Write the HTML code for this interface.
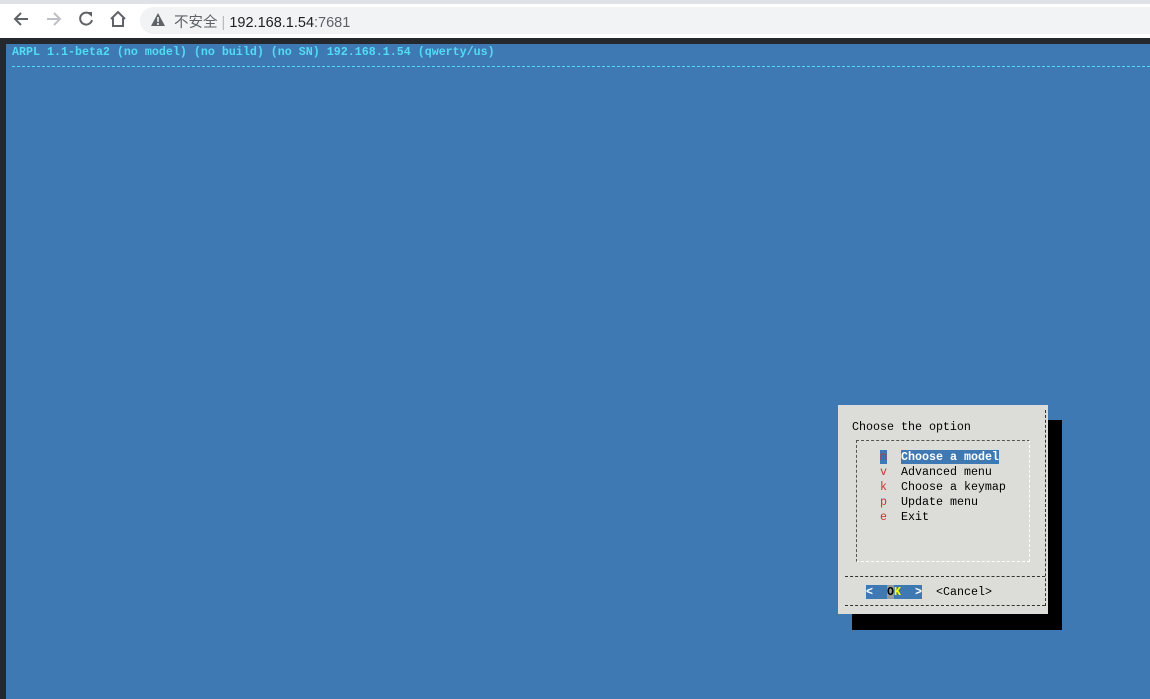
<!DOCTYPE html>
<html><head><meta charset="utf-8"><style>
*{margin:0;padding:0;box-sizing:border-box}
body{width:1150px;height:699px;overflow:hidden;background:#3f79b3;position:relative;font-family:"Liberation Mono",monospace}
#top{position:absolute;left:0;top:0;width:1150px;height:38px;background:#fff}
#tabs{position:absolute;left:0;top:0;width:1150px;height:4px;background:#dee1e6}
#pill{position:absolute;left:140px;top:7px;width:1010px;height:27px;background:#f1f3f4;border-radius:14px 0 0 14px}
#dark{position:absolute;left:0;top:38px;width:1150px;height:6px;background:#25282c}
#lb{position:absolute;left:0;top:38px;width:6px;height:661px;background:#25282c}
.ic{position:absolute;top:10px}
#url{position:absolute;left:174px;top:11px;font:14.5px "Liberation Sans","Noto Sans CJK SC",sans-serif;color:#5f6368}
#url b{font-weight:normal;color:#202124}
.t{position:absolute;font-size:11.67px;line-height:15px;white-space:pre}
#hdr{left:12px;top:45px;color:#52dcf3;font-weight:bold}
#dash{position:absolute;left:12px;top:66px;width:1138px;border-top:1px dashed #52dcf3}
#sh{position:absolute;left:852px;top:420px;width:210px;height:210px;background:#000}
#dlg{position:absolute;left:838px;top:405px;width:210px;height:209px;background:#dcdcd8}
#in{position:absolute;left:856px;top:440px;width:174px;height:122px;border:1px dashed #555;border-right-color:#fff;border-bottom-color:#fff}
#sep{position:absolute;left:845px;top:576px;width:200px;border-top:1px dashed #333}
#bot{position:absolute;left:845px;top:605px;width:200px;border-top:1px dashed #333}
#dr{position:absolute;left:1045px;top:410px;height:196px;border-left:1px dashed #333}
.k{color:#c33}
.sel{background:#3f79b3;color:#fff;font-weight:bold}
</style></head><body>
<div id="top"><div id="tabs"></div><div id="pill"></div>
<svg class="ic" style="left:12px" width="18" height="18" viewBox="0 0 18 18"><path d="M16 9H3M9 3L3 9l6 6" stroke="#5f6368" stroke-width="2" fill="none"/></svg>
<svg class="ic" style="left:45px" width="18" height="18" viewBox="0 0 18 18"><path d="M2 9h13M9 3l6 6-6 6" stroke="#bdc1c6" stroke-width="2" fill="none"/></svg>
<svg class="ic" style="left:77px" width="18" height="18" viewBox="0 0 18 18"><path d="M14 5A6 6 0 1 0 15 10" stroke="#5f6368" stroke-width="2" fill="none"/><path d="M10 2h5v5z" fill="#5f6368"/></svg>
<svg class="ic" style="left:109px" width="18" height="18" viewBox="0 0 18 18"><path d="M2 9L9 2l7 7M4 8v8h10V8" stroke="#5f6368" stroke-width="2" fill="none"/></svg>
<svg class="ic" style="left:151px;top:13px" width="14" height="13" viewBox="0 0 14 13"><path d="M7 0L14 13H0z" fill="#5f6368"/><path d="M7 4v5M7 10v2" stroke="#fff" stroke-width="1.5"/></svg>
<div id="url">不安全 <span style="color:#bbb">|</span> <b>192.168.1.54</b>:7681</div>
</div>
<div id="dark"></div><div id="lb"></div>
<div class="t" id="hdr" style="top:45px">ARPL 1.1-beta2 (no model) (no build) (no SN) 192.168.1.54 (qwerty/us)</div>
<div id="dash"></div>
<div id="sh"></div><div id="dlg"></div>
<div id="in"></div><div id="sep"></div><div id="bot"></div><div id="dr"></div>
<div class="t" style="left:852px;top:420px;color:#000">Choose the option</div>
<div class="t" style="left:880px;top:450px;color:#000"><span class="k" style="background:#3f79b3">m</span>  <span class="sel">Choose a model</span>
<span class="k">v</span>  Advanced menu
<span class="k">k</span>  Choose a keymap
<span class="k">p</span>  Update menu
<span class="k">e</span>  Exit</div>
<div class="t" style="left:866px;top:585px;color:#000"><span style="background:#3f79b3;color:#fff;font-weight:bold">&lt;  <span style="background:#999;color:#000">O</span><span style="color:#ff0">K</span>  &gt;</span>  &lt;Cancel&gt;</div>
</body></html>
